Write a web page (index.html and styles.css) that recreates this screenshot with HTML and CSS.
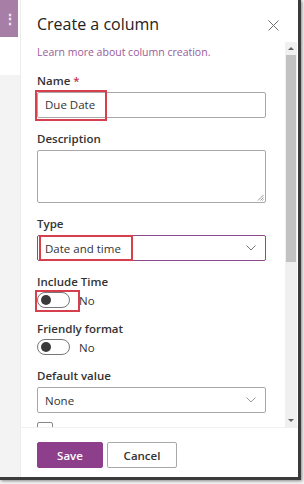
FILE: index.html
```html
<!DOCTYPE html>
<html lang="en">
<head>
  <meta charset="UTF-8">
  <meta name="viewport" content="width=device-width, initial-scale=1.0">
  <title>Create a column</title>
  <link rel="stylesheet" href="styles.css">
</head>
<body>
  <div class="frame">
    <div class="rail">
      <div class="rail-top"><span class="dots">⋮</span></div>
      <div class="rail-gap"></div>
      <div class="rail-rest"></div>
    </div>

    <div class="panel">
      <div class="head">
        <h1>Create a column</h1>
        <svg class="close" width="11" height="11" viewBox="0 0 11 11">
          <path d="M0.5 0.5 L10.5 10.5 M10.5 0.5 L0.5 10.5" stroke="#707070" stroke-width="1" fill="none"/>
        </svg>
      </div>

      <div class="body">
        <div class="form">
          <a class="learn" href="#">Learn more about column creation.</a>

          <div class="field first">
            <label>Name <span class="req">*</span></label>
            <div class="input">Due Date</div>
            <div class="mark mark-name"></div>
          </div>

          <div class="field desc">
            <label>Description</label>
            <div class="textarea">
              <svg class="grip" width="7" height="7" viewBox="0 0 7 7">
                <path d="M6.5 1 L1 6.5 M6.5 3.5 L3.5 6.5 M6.5 5.5 L5.5 6.5" stroke="#999" stroke-width="1"/>
              </svg>
            </div>
          </div>

          <div class="field">
            <label>Type</label>
            <div class="select active">
              <span>Date and time</span>
              <svg class="chev" width="10" height="6" viewBox="0 0 10 6"><path d="M0.5 0.5 L5 5 L9.5 0.5" stroke="#777" fill="none"/></svg>
            </div>
            <div class="mark mark-type"></div>
          </div>

          <div class="field">
            <label>Include Time</label>
            <div class="toggle-row">
              <span class="toggle"><span class="knob"></span></span>
              <span class="toggle-text">No</span>
            </div>
            <div class="mark mark-toggle"></div>
          </div>

          <div class="field">
            <label>Friendly format</label>
            <div class="toggle-row">
              <span class="toggle"><span class="knob"></span></span>
              <span class="toggle-text">No</span>
            </div>
          </div>

          <div class="field">
            <label>Default value</label>
            <div class="select">
              <span>None</span>
              <svg class="chev" width="10" height="6" viewBox="0 0 10 6"><path d="M0.5 0.5 L5 5 L9.5 0.5" stroke="#999" fill="none"/></svg>
            </div>
          </div>

          <div class="checkbox"></div>
        </div>

        <div class="scrollbar">
          <div class="sb-btn"><span class="arrow up"></span></div>
          <div class="sb-thumb"></div>
          <div class="sb-track"></div>
          <div class="sb-btn"><span class="arrow down"></span></div>
        </div>
      </div>

      <div class="footer">
        <button class="btn primary">Save</button>
        <button class="btn">Cancel</button>
      </div>
    </div>
  </div>
</body>
</html>
```

FILE: styles.css
```css
* {
  box-sizing: border-box;
}
html, body {
  margin: 0;
  padding: 0;
}
body {
  width: 304px;
  height: 484px;
  background: #f4f4f4;
  font-family: "Open Sans", "Noto Sans", sans-serif;
  color: #323130;
  overflow: hidden;
}
.frame {
  display: flex;
  width: 301px;
  height: 480px;
  background: #fff;
  border-right: 3px solid #3b3b3b;
  border-bottom: 3px solid #3b3b3b;
  box-shadow: 1px 1px 3px rgba(0,0,0,0.45);
}

/* left rail of the page behind */
.rail {
  width: 20px;
  display: flex;
  flex-direction: column;
}
.rail-top {
  height: 37px;
  width: 18px;
  background: #a67ea6;
  display: flex;
  justify-content: flex-end;
  align-items: center;
  padding-right: 1px;
}
.dots {
  color: #f2e8f2;
  font-size: 14px;
  font-weight: bold;
  line-height: 1;
}
.rail-gap {
  height: 38px;
}
.rail-rest {
  flex: 1;
  background: #f3f3f3;
}

/* panel */
.panel {
  flex: 1;
  display: flex;
  flex-direction: column;
  border-left: 1px solid #ececec;
}
.head {
  height: 42px;
  display: flex;
  align-items: center;
  justify-content: space-between;
  padding: 6px 19px 0 16px;
}
.head h1 {
  margin: 0;
  font-size: 16px;
  font-weight: 400;
  color: #222;
}
.close {
  margin-top: 2px;
}
.body {
  flex: 1;
  display: flex;
  min-height: 0;
}
.form {
  flex: 1;
  padding: 3px 19px 0 16px;
  overflow: hidden;
}
.learn {
  display: block;
  font-size: 10.5px;
  line-height: 15px;
  color: #9a5a9a;
  text-decoration: none;
}
.field {
  position: relative;
  margin-top: 13px;
}
.field.desc {
  margin-bottom: 2px;
}
.field label {
  display: block;
  font-size: 11.5px;
  line-height: 16px;
  font-weight: 600;
  color: #333;
}
.req {
  color: #c4314b;
}
.input, .select, .textarea {
  margin-top: 3px;
  border: 1px solid #a8a8a8;
  border-radius: 2px;
  font-size: 11.5px;
  color: #333;
}
.input {
  height: 26px;
  line-height: 24px;
  padding: 0 7px;
}
.textarea {
  position: relative;
  height: 53px;
}
.grip {
  position: absolute;
  right: 1px;
  bottom: 1px;
}
.select {
  height: 26px;
  display: flex;
  align-items: center;
  justify-content: space-between;
  padding: 0 9px 0 7px;
}
.select.active {
  border-color: #8b4a8b;
}
.toggle-row {
  display: flex;
  align-items: center;
  height: 16px;
  margin-top: 2px;
}
.toggle {
  width: 33px;
  height: 16px;
  border: 1px solid #777;
  border-radius: 8px;
  display: flex;
  align-items: center;
  padding-left: 3px;
}
.knob {
  width: 10px;
  height: 10px;
  border-radius: 50%;
  background: #3a3a3a;
}
.toggle-text {
  margin-left: 9px;
  font-size: 11.5px;
  color: #333;
}
.checkbox {
  margin-top: 9px;
  width: 16px;
  height: 16px;
  border: 1px solid #888;
  border-radius: 2px;
}

/* red annotation boxes drawn over the screenshot */
.mark {
  position: absolute;
  border: 2px solid #d5404c;
}
.mark-name {
  left: -2px;
  top: 17px;
  width: 72px;
  height: 31px;
}
.mark-type {
  left: 2px;
  top: 19px;
  width: 94px;
  height: 26px;
}
.mark-toggle {
  left: -2px;
  top: 16px;
  width: 45px;
  height: 22px;
}

/* scrollbar */
.scrollbar {
  width: 12px;
  margin-right: 1px;
  display: flex;
  flex-direction: column;
  background: #f0f0f0;
}
.sb-btn {
  height: 13px;
  display: flex;
  align-items: center;
  justify-content: center;
}
.arrow {
  width: 0;
  height: 0;
  border-left: 3px solid transparent;
  border-right: 3px solid transparent;
}
.arrow.up {
  border-bottom: 3px solid #606060;
}
.arrow.down {
  border-top: 3px solid #606060;
}
.sb-thumb {
  height: 207px;
  margin: 0 1px;
  background: #c2c2c2;
}
.sb-track {
  flex: 1;
}

/* footer */
.footer {
  height: 50px;
  display: flex;
  gap: 4px;
  padding: 14px 16px 0;
  border-top: 1px solid #f0f0f0;
}
.btn {
  height: 26px;
  padding: 0;
  width: 70px;
  border: 1px solid #a8a8a8;
  border-radius: 2px;
  background: #fff;
  font-family: inherit;
  font-size: 11.5px;
  font-weight: 600;
  color: #333;
}
.btn.primary {
  width: 66px;
  background: #8e3f8c;
  border-color: #8e3f8c;
  color: #fff;
}
```
